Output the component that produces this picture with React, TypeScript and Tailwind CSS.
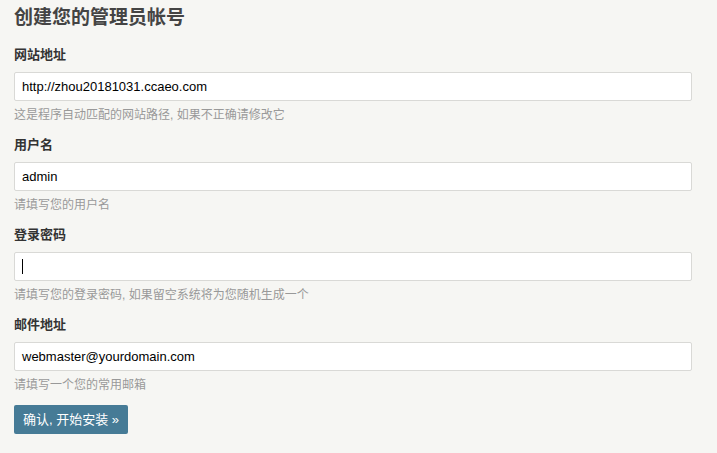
import React from "react";

const font = { fontFamily: '"Liberation Sans", Arial, "Noto Sans CJK SC", sans-serif' };

function Field({ label, value, help, caret }: { label: string; value: string; help: string; caret?: boolean }) {
  return (
    <div className="mb-[11px]">
      <div className="text-[13px] leading-[20px] font-bold text-[#333]">{label}</div>
      <div className="relative mt-[7px] w-[678px] h-[29px] bg-white border border-[#d9d9d6] rounded-[2px] flex items-center pl-[7px] text-[13px] text-black">
        {value}
        {caret && <div className="w-px h-[15px] bg-black" />}
      </div>
      <div className="mt-[5px] text-[12px] leading-[18px] text-[#999]">{help}</div>
    </div>
  );
}

export default function App() {
  return (
    <div className="min-h-[453px] bg-[#f6f6f3] pl-[14px] pt-[4px]" style={font}>
      <h2 className="text-[19px] leading-[28px] font-bold text-[#444] mb-[13px]">创建您的管理员帐号</h2>
      <Field label="网站地址" value="http://zhou20181031.ccaeo.com" help="这是程序自动匹配的网站路径, 如果不正确请修改它" />
      <Field label="用户名" value="admin" help="请填写您的用户名" />
      <Field label="登录密码" value="" caret help="请填写您的登录密码, 如果留空系统将为您随机生成一个" />
      <Field label="邮件地址" value="webmaster@yourdomain.com" help="请填写一个您的常用邮箱" />
      <button className="mt-[1px] h-[29px] w-[114px] bg-[#467b96] text-white text-[13px] rounded-[2px] flex items-center justify-center">确认, 开始安装 »</button>
    </div>
  );
}
